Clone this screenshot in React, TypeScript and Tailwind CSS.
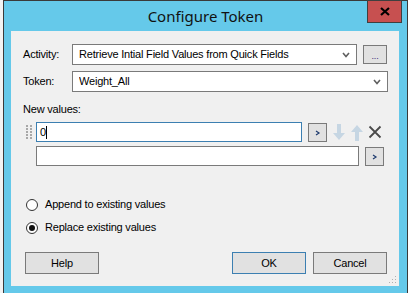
import React from 'react';

function Chevron() {
  return (
    <svg width="8" height="6" viewBox="0 0 8 6" className="shrink-0">
      <polyline points="1,1 4,4.5 7,1" fill="none" stroke="#606060" strokeWidth="1.6" />
    </svg>
  );
}

function ComboBox({ text, width }: { text: string; width: string }) {
  return (
    <div className={`${width} h-[21px] bg-white border border-[#7a7a7a] flex items-center pl-[6px] pr-[6px]`}>
      <span className="flex-1 truncate">{text}</span>
      <Chevron />
    </div>
  );
}

function SmallButton() {
  return (
    <div className="w-[19px] h-[19px] bg-[#e1e1e1] border border-[#7a7a7a] flex items-center justify-center">
      <svg width="6" height="6" viewBox="0 0 6 6">
        <polyline points="1,1 4,3 1,5" fill="none" stroke="#1e3a6e" strokeWidth="1.2" />
      </svg>
    </div>
  );
}

function DragHandle() {
  return (
    <div className="w-[6px] grid grid-cols-2 gap-x-[2px] gap-y-[1px] mt-[3px]">
      {Array.from({ length: 10 }).map((_, i) => (
        <div key={i} className="w-[2px] h-[2px] bg-[#a8a8a8]" />
      ))}
    </div>
  );
}

function Radio({ label, checked }: { label: string; checked?: boolean }) {
  return (
    <div className="flex items-center h-[13px] pl-[15px] gap-[7px]">
      <div className="w-[12px] h-[12px] rounded-full border border-[#333] bg-white flex items-center justify-center">
        {checked && <div className="w-[6px] h-[6px] rounded-full bg-[#111]" />}
      </div>
      <span>{label}</span>
    </div>
  );
}

function DialogButton({ label, primary }: { label: string; primary?: boolean }) {
  return (
    <div
      className={`w-[74px] h-[22px] bg-[#e1e1e1] border flex items-center justify-center ${
        primary ? 'border-[#3c7fb1]' : 'border-[#7a7a7a]'
      }`}
    >
      {label}
    </div>
  );
}

export default function App() {
  return (
    <div className="w-[408px] h-[293px] overflow-hidden bg-white flex font-['Liberation_Sans',Arial,sans-serif] text-[11px] leading-[13px] tracking-[-0.2px] text-black">
      <div className="w-[3px] shrink-0 bg-[#f3f3f3]" />
      <div className="flex-1 bg-[#65c9ea] border-l border-t border-r border-[#3a3a3a] flex flex-col">
        {/* title bar */}
        <div className="relative h-[30px] flex items-center justify-center">
          <span className="font-['Noto_Sans',sans-serif] text-[15px] leading-[20px] tracking-normal text-[#111]">
            Configure Token
          </span>
          <div className="absolute right-[5px] top-[-1px] w-[35px] h-[23px] bg-[#c75050] border border-[#3f3f3f] flex items-center justify-center">
            <svg width="10" height="9" viewBox="0 0 10 9">
              <path d="M1 1 L9 8 M9 1 L1 8" stroke="#000" strokeWidth="2.2" />
            </svg>
          </div>
        </div>

        {/* client area */}
        <div className="relative ml-[7px] w-[388px] h-[255px] bg-[#f0f0f0] flex flex-col">
          <div className="flex items-center mt-[13px] pl-[12px]">
            <span className="w-[49px]">Activity:</span>
            <ComboBox text="Retrieve Intial Field Values from Quick Fields" width="w-[285px]" />
            <div className="ml-[6px] w-[24px] h-[19px] bg-[#e1e1e1] border border-[#7a7a7a] flex items-end justify-center pb-[2px]">
              <span className="text-[9px] leading-[9px] text-[#3b2a7a]">...</span>
            </div>
          </div>
          <div className="flex items-center mt-[6px] pl-[12px]">
            <span className="w-[49px]">Token:</span>
            <ComboBox text="Weight_All" width="w-[316px]" />
          </div>

          <div className="mt-[11px] pl-[12px]">New values:</div>

          <div className="flex items-start mt-[6px] pl-[15px]">
            <DragHandle />
            <div className="ml-[4px] w-[266px] h-[20px] bg-white border border-[#3c7fb1] flex items-center pl-[3px]">
              <span>0</span>
              <div className="w-px h-[13px] bg-black" />
            </div>
            <div className="ml-[6px] mt-px">
              <SmallButton />
            </div>
            <div className="ml-[5px] mt-[1px] flex items-center gap-[4px] h-[18px]">
              <svg width="14" height="17" viewBox="0 0 14 17">
                <path d="M5 0 H9 V9 H13 L7 16 L1 9 H5 Z" fill="#c6d6e3" />
              </svg>
              <svg width="14" height="17" viewBox="0 0 14 17">
                <path d="M5 17 H9 V8 H13 L7 1 L1 8 H5 Z" fill="#c6d6e3" />
              </svg>
              <svg width="14" height="14" viewBox="0 0 14 14">
                <path d="M1.5 1.5 L12.5 12.5 M12.5 1.5 L1.5 12.5" stroke="#4a4a4a" strokeWidth="1.8" />
              </svg>
            </div>
          </div>

          <div className="flex items-start mt-[4px] pl-[25px]">
            <div className="w-[323px] h-[20px] bg-white border border-[#7a7a7a]" />
            <div className="ml-[6px] mt-px">
              <SmallButton />
            </div>
          </div>

          <div className="mt-[32px]">
            <Radio label="Append to existing values" />
          </div>
          <div className="mt-[10px]">
            <Radio label="Replace existing values" checked />
          </div>

          <div className="flex items-center mt-[18px] pl-[14px] pr-[12px]">
            <DialogButton label="Help" />
            <div className="flex-1" />
            <DialogButton label="OK" primary />
            <div className="ml-[7px]">
              <DialogButton label="Cancel" />
            </div>
          </div>

          {/* size grip */}
          <svg className="absolute right-[2px] bottom-[2px]" width="8" height="8" viewBox="0 0 8 8">
            <rect x="6" y="0" width="1" height="1" fill="#b0b0b0" />
            <rect x="3" y="3" width="1" height="1" fill="#b0b0b0" />
            <rect x="6" y="3" width="1" height="1" fill="#b0b0b0" />
            <rect x="0" y="6" width="1" height="1" fill="#b0b0b0" />
            <rect x="3" y="6" width="1" height="1" fill="#b0b0b0" />
            <rect x="6" y="6" width="1" height="1" fill="#b0b0b0" />
          </svg>
        </div>
      </div>
    </div>
  );
}
